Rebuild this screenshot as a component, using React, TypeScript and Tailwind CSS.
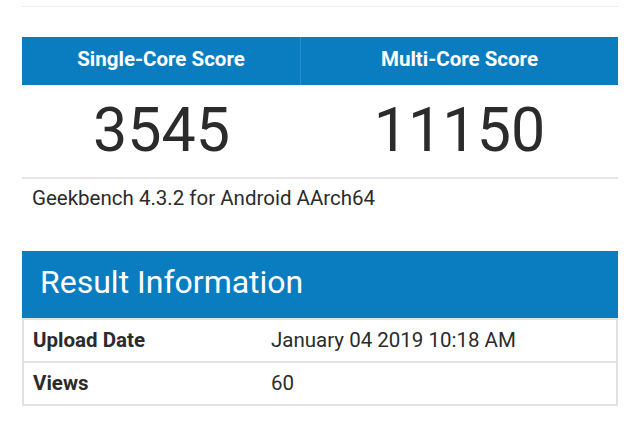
import React from "react";

export default function App() {
  const font = { fontFamily: "Roboto, 'Noto Sans', sans-serif" };
  return (
    <div className="w-[640px] h-[427px] bg-white overflow-hidden px-[22px]" style={font}>
      <div className="pt-[6px]">
        <div className="h-[1px] bg-[#ececec]" />
      </div>
      <div className="mt-[30px]">
        <div className="grid grid-cols-[279px_1fr] h-[48px] bg-[#0a7dc1] text-white font-bold text-[20.5px]">
          <div className="flex items-center justify-center border-r border-[#2a8fcb] pb-[3px]">Single-Core Score</div>
          <div className="flex items-center justify-center pb-[3px]">Multi-Core Score</div>
        </div>
        <div className="grid grid-cols-[279px_1fr] h-[94px] border-b-2 border-[#e6e6e6] text-[#2b2b2b] text-[61px] leading-none">
          <div className="flex items-center justify-center pb-[2px]">3545</div>
          <div className="flex items-center justify-center pb-[2px]">11150</div>
        </div>
      </div>
      <div className="pl-[10px] pt-[4px] text-[20.5px] text-[#2b2b2b]">Geekbench 4.3.2 for Android AArch64</div>
      <div className="mt-[37px] border-b-2 border-[#e2e2e2]">
        <div className="h-[67px] bg-[#0a7dc1] text-white text-[32px] flex items-center pl-[18px] pb-[4px]">Result Information</div>
        <div className="border-x-2 border-[#e2e2e2] text-[20.5px] text-[#2b2b2b]">
          <div className="h-[45px] flex items-center border-b-2 border-[#e2e2e2] border-t-2">
            <div className="w-[247px] pl-[9px] font-bold">Upload Date</div>
            <div>January 04 2019 10:18 AM</div>
          </div>
          <div className="h-[41px] flex items-center">
            <div className="w-[247px] pl-[9px] font-bold">Views</div>
            <div>60</div>
          </div>
        </div>
      </div>
    </div>
  );
}
